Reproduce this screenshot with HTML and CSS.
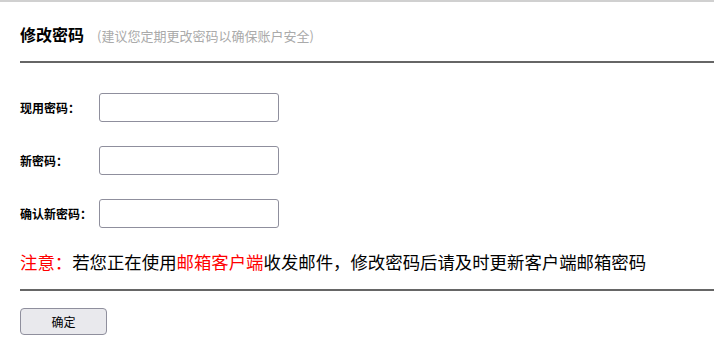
FILE: index.html
```html
<!DOCTYPE html>
<html lang="zh-CN">
<head>
    <meta charset="UTF-8">
    <title>修改密码</title>
    <link rel="stylesheet" href="styles.css">
</head>
<body>

<div class="page">
    <!-- Title -->
    <div class="header">
        <span class="title">修改密码</span>
        <span class="tip">(建议您定期更改密码以确保账户安全)</span>
    </div>
    <div class="line"></div>

    <!-- Password fields -->
    <div class="form">
        <div class="row">
            <label class="label">现用密码：</label>
            <input type="password" class="field">
        </div>
        <div class="row">
            <label class="label">新密码：</label>
            <input type="password" class="field">
        </div>
        <div class="row">
            <label class="label">确认新密码：</label>
            <input type="password" class="field">
        </div>
    </div>

    <div class="note">
        <span class="red">注意：</span>若您正在使用<span class="red">邮箱客户端</span>收发邮件，修改密码后请及时更新客户端邮箱密码
    </div>
    <div class="line"></div>

    <div class="actions">
        <button class="btn">确定</button>
    </div>
</div>

</body>
</html>
```

FILE: styles.css
```css
/* Basic reset */
html, body {
    margin: 0;
    padding: 0;
    background-color: #fff;
    font-family: "Noto Sans CJK SC", "Liberation Sans", sans-serif;
    color: #000;
}

.page {
    border-top: 2px solid #d0d0d0;
}

/* Header */
.header {
    display: flex;
    align-items: baseline;
    padding: 20px 0 0 20px;
    height: 24px;
    line-height: 24px;
    margin-bottom: 15px;
}

.title {
    font-size: 16px;
    font-weight: bold;
}

.tip {
    font-size: 13px;
    color: #aaa;
    margin-left: 13px;
}

/* Divider */
.line {
    margin-left: 20px;
    border-top: 2px solid #666;
}

/* Form */
.form {
    display: flex;
    flex-direction: column;
    gap: 24px;
    padding: 30px 0 0 20px;
}

.row {
    display: flex;
    align-items: center;
    height: 29px;
}

.label {
    width: 79px;
    font-size: 12px;
    font-weight: bold;
}

.field {
    width: 180px;
    height: 29px;
    box-sizing: border-box;
    border: 1px solid #8f8f9d;
    border-radius: 3px;
    padding: 2px 4px;
    margin: 0;
}

/* Note */
.note {
    padding-left: 20px;
    margin: 22px 0 15px;
    font-size: 17.4px;
    line-height: 24px;
    white-space: nowrap;
}

.red {
    color: #f00;
}

/* Buttons */
.actions {
    padding: 17px 0 0 20px;
}

.btn {
    width: 87px;
    height: 27px;
    font-family: "Noto Sans CJK SC", sans-serif;
    font-size: 12px;
    background-color: #e9e9ed;
    border: 1px solid #8f8f9d;
    border-radius: 4px;
    padding: 0;
    cursor: pointer;
}
```
